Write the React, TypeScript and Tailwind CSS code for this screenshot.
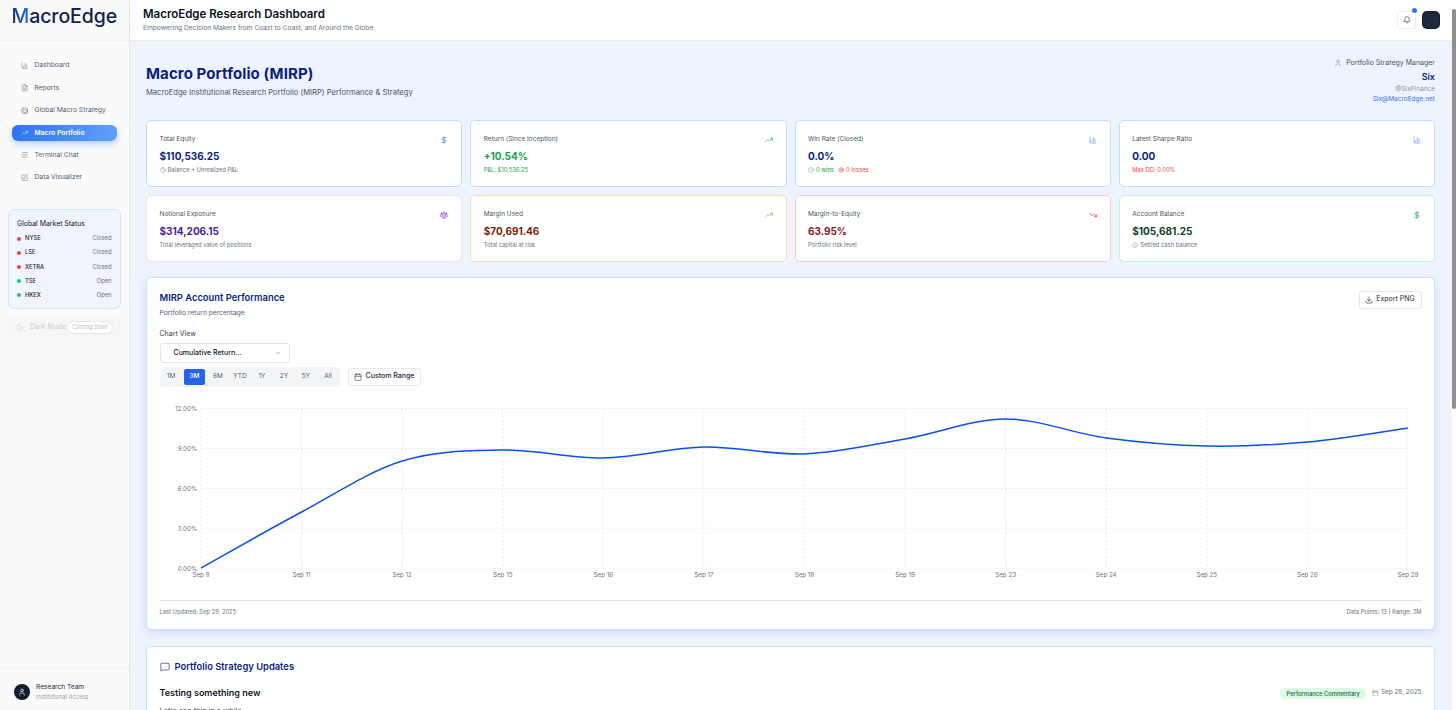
import React from "react";
import {
  Bell,
  Calendar,
  ChartColumn,
  CircleCheck,
  Clock,
  DollarSign,
  Download,
  Earth,
  FileText,
  Info,
  Menu,
  MessageSquare,
  Moon,
  ChevronDown,
  Scale,
  SquarePen,
  Target,
  TrendingDown,
  TrendingUp,
  User,
} from "lucide-react";

const navItems = [
  { label: "Dashboard", icon: ChartColumn },
  { label: "Reports", icon: FileText },
  { label: "Global Macro Strategy", icon: Earth },
  { label: "Macro Portfolio", icon: TrendingUp, active: true },
  { label: "Terminal Chat", icon: Menu },
  { label: "Data Visualizer", icon: SquarePen },
];

const markets = [
  { name: "NYSE", status: "Closed", open: false },
  { name: "LSE", status: "Closed", open: false },
  { name: "XETRA", status: "Closed", open: false },
  { name: "TSE", status: "Open", open: true },
  { name: "HKEX", status: "Open", open: true },
];

const ranges = ["1M", "3M", "6M", "YTD", "1Y", "2Y", "5Y", "All"];

// chart points as pixel positions inside the svg
const labels = ["Sep 8", "Sep 11", "Sep 12", "Sep 15", "Sep 16", "Sep 17", "Sep 18", "Sep 19", "Sep 23", "Sep 24", "Sep 25", "Sep 26", "Sep 29"];
const ys = [568, 512, 461, 450, 458, 447, 454, 439, 419, 438, 446, 442, 428];
const stepX = 100.58;

function linePath() {
  const pts = ys.map((y, i) => [200 + i * stepX, y]);
  let d = `M${pts[0][0]},${pts[0][1]}`;
  for (let i = 0; i < pts.length - 1; i++) {
    const p0 = pts[Math.max(i - 1, 0)];
    const p1 = pts[i];
    const p2 = pts[i + 1];
    const p3 = pts[Math.min(i + 2, pts.length - 1)];
    const c1x = p1[0] + (p2[0] - p0[0]) / 6;
    const c1y = p1[1] + (p2[1] - p0[1]) / 6;
    const c2x = p2[0] - (p3[0] - p1[0]) / 6;
    const c2y = p2[1] - (p3[1] - p1[1]) / 6;
    d += ` C${c1x},${c1y} ${c2x},${c2y} ${p2[0]},${p2[1]}`;
  }
  return d;
}

function Chart() {
  const grid = [
    { y: 408.5, label: "12.00%" },
    { y: 448.5, label: "9.00%" },
    { y: 488.5, label: "6.00%" },
    { y: 528, label: "3.00%" },
    { y: 568, label: "0.00%" },
  ];
  return (
    <svg width="1289" height="180" viewBox="146 398 1289 180" className="block mt-[11px]">
      {grid.map((g) => (
        <g key={g.y}>
          <line x1="200" x2="1407" y1={g.y} y2={g.y} stroke="#e5e7eb" strokeWidth="0.8" strokeDasharray="2 2" />
          <text x="196" y={g.y + 2.5} textAnchor="end" fontSize="6.2" fill="#6b7280">
            {g.label}
          </text>
        </g>
      ))}
      {labels.map((l, i) => (
        <g key={l}>
          <line x1={200 + i * stepX} x2={200 + i * stepX} y1="408" y2="568" stroke="#e5e7eb" strokeWidth="0.8" strokeDasharray="2 2" />
          <text x={200 + i * stepX} y="577" textAnchor="middle" fontSize="6.2" fill="#6b7280">
            {l}
          </text>
        </g>
      ))}
      <path d={linePath()} fill="none" stroke="#0b50e8" strokeWidth="1.5" />
    </svg>
  );
}

function StatCard({
  title,
  value,
  valueClass,
  border,
  icon,
  children,
}: {
  title: string;
  value: string;
  valueClass: string;
  border: string;
  icon: React.ReactNode;
  children: React.ReactNode;
}) {
  return (
    <div className={`h-[67px] rounded-[5px] border bg-white px-[12.5px] pt-[12.5px] ${border}`}>
      <div className="flex items-center justify-between h-[12px] pr-[0.5px]">
        <span className="text-[6.5px] text-[#4b5563]">{title}</span>
        {icon}
      </div>
      <div className={`mt-[1.5px] text-[10px] leading-[18px] font-bold ${valueClass}`}>{value}</div>
      <div className="-mt-[0.5px] flex items-center gap-[2px] text-[5.8px] leading-[10px] text-[#6b7280]">{children}</div>
    </div>
  );
}

export default function App() {
  return (
    <div className="flex h-[710px] w-[1456px] overflow-hidden bg-white text-[#111827] font-['Inter',sans-serif]">
      {/* Sidebar */}
      <aside className="flex w-[130px] shrink-0 flex-col border-r border-[#e5e7eb] bg-[#fafafa]">
        <div className="flex h-[41px] shrink-0 items-center border-b border-[#f0f1f3] pb-[7px] pl-[11.5px] text-[19.5px] font-medium tracking-[-0.1px] text-[#0f2350]">
          <span className="bg-gradient-to-r from-[#12306e] to-[#1d6ff0] bg-clip-text text-transparent">M</span>acroEdge
        </div>
        <nav className="flex flex-col gap-[6.4px] px-[12px] pt-[16.5px]">
          {navItems.map((item) => (
            <div
              key={item.label}
              className={
                item.active
                  ? "flex h-[16px] items-center gap-[6.5px] rounded-[6px] bg-gradient-to-r from-[#2f74ee] to-[#60a0fa] pl-[8.5px] text-[6.75px] font-semibold text-white shadow-[0_3px_6px_rgba(59,130,246,0.35)]"
                  : "flex h-[16px] items-center gap-[6.5px] pl-[8.5px] text-[6.75px] text-[#566173]"
              }
            >
              <item.icon size={7.5} strokeWidth={1.6} className={item.active ? "text-white" : "text-[#6b7280]"} />
              <span className="whitespace-nowrap">{item.label}</span>
            </div>
          ))}
        </nav>
        <div className="mx-[8px] mt-[23.5px] h-[100px] rounded-[6px] border border-[#d6e4fb] bg-[#eff4fe] px-[8px] pt-[8.5px]">
          <div className="text-[6.9px] leading-[12px] text-[#111827]">Global Market Status</div>
          <div className="mt-[1px] flex flex-col">
            {markets.map((m) => (
              <div key={m.name} className="flex h-[14.2px] items-center justify-between pr-[0.5px]">
                <div className="flex items-center gap-[4px]">
                  <span className={m.open ? "h-[4px] w-[4px] rounded-full bg-[#22c55e]" : "h-[4px] w-[4px] rounded-full bg-[#ef4444]"} />
                  <span className="text-[5.8px] font-medium text-[#1f2937]">{m.name}</span>
                </div>
                <span className="text-[5.8px] text-[#6b7280]">{m.status}</span>
              </div>
            ))}
          </div>
        </div>
        <div className="mx-[8px] mt-[8.5px] flex h-[20px] items-center rounded-[6px] bg-[#f6f6f7] pl-[8px] text-[#c9ccd2]">
          <Moon size={8} strokeWidth={1.6} />
          <span className="ml-[6px] text-[7px]">Dark Mode</span>
          <span className="ml-[0.5px] rounded-full border border-[#e5e7eb] bg-white px-[4.5px] text-[5.5px] leading-[11px] text-[#b9bdc5]">Coming Soon</span>
        </div>
        <div className="mt-auto flex h-[42px] items-center gap-[6px] border-t border-[#f0f1f3] pl-[14px] pt-[4px]">
          <div className="flex h-[16px] w-[16px] items-center justify-center rounded-full bg-[#111c2e] text-white">
            <User size={8} strokeWidth={2} />
          </div>
          <div>
            <div className="text-[6.6px] leading-[10px] text-[#1f2937]">Research Team</div>
            <div className="text-[5.7px] leading-[9px] text-[#9aa3af]">Institutional Access</div>
          </div>
        </div>
      </aside>

      <div className="flex min-w-0 flex-1 flex-col">
        {/* Top bar */}
        <header className="flex h-[41px] shrink-0 items-center justify-between border-b border-[#e8eaee] bg-white pl-[13px] pr-[13px]">
          <div>
            <h1 className="text-[11.5px] font-semibold leading-[15px] text-[#0b1220]">MacroEdge Research Dashboard</h1>
            <p className="mt-[1.5px] text-[6.65px] leading-[10px] text-[#6b7280]">Empowering Decision Makers from Coast to Coast, and Around the Globe</p>
          </div>
          <div className="flex items-center gap-[7px]">
            <div className="relative flex h-[18px] w-[19px] items-center justify-center rounded-[3px] border border-[#eceef1] bg-white">
              <Bell size={8} strokeWidth={1.7} className="text-[#1f2937]" />
              <span className="absolute -right-[2px] -top-[4px] h-[5px] w-[5px] rounded-full bg-[#2f74ee]" />
            </div>
            <div className="h-[16px] w-[16px] rounded-[4px] bg-[#1e293b] ring-1 ring-[#111827]" />
          </div>
        </header>

        {/* Main */}
        <main className="min-h-0 flex-1 overflow-hidden bg-[#eef4fe] pl-[16px] pr-[17px] pt-[20px]">
          <div className="flex h-[59px] justify-between">
            <div>
              <h2 className="text-[15px] font-bold leading-[26px] tracking-[0.1px] text-[#0c1f80]">Macro Portfolio (MIRP)</h2>
              <p className="-mt-[0.5px] text-[7.6px] leading-[11px] text-[#4b5563]">MacroEdge Institutional Research Portfolio (MIRP) Performance &amp; Strategy</p>
            </div>
            <div className="-mt-[3px] flex flex-col items-end text-right">
              <div className="flex items-center gap-[4px] text-[7px] leading-[10px] text-[#4b5563]">
                <User size={8} strokeWidth={1.6} className="text-[#8a93a1]" />
                Portfolio Strategy Manager
              </div>
              <div className="mt-[3px] text-[9px] font-semibold leading-[12px] text-[#0c1f80]">Six</div>
              <div className="mt-[2px] text-[6.5px] leading-[9px] text-[#8a93a1]">@SixFinance</div>
              <div className="text-[6.5px] leading-[11px] text-[#3b6ff0]">Six@MacroEdge.net</div>
            </div>
          </div>

          <div className="grid grid-cols-4 gap-x-[8px] gap-y-[8px]">
            <StatCard title="Total Equity" value="$110,536.25" valueClass="text-[#0c1f80]" border="border-[#bfdbfe]" icon={<DollarSign size={8} strokeWidth={2} className="text-[#3b82f6]" />}>
              <Clock size={6} strokeWidth={1.5} />
              Balance + Unrealized P&amp;L
            </StatCard>
            <StatCard title="Return (Since Inception)" value="+10.54%" valueClass="text-[#16a34a]" border="border-[#bfdbfe]" icon={<TrendingUp size={8} strokeWidth={2} className="text-[#16a34a]" />}>
              <span className="text-[#16a34a]">P&amp;L: $10,536.25</span>
            </StatCard>
            <StatCard title="Win Rate (Closed)" value="0.0%" valueClass="text-[#0c1f80]" border="border-[#bfdbfe]" icon={<ChartColumn size={8} strokeWidth={1.6} className="text-[#3b82f6]" />}>
              <CircleCheck size={6} strokeWidth={1.5} className="text-[#16a34a]" />
              <span className="text-[#16a34a]">0 wins</span>
              <Target size={6} strokeWidth={1.5} className="ml-[2px] text-[#ef4444]" />
              <span className="text-[#ef4444]">0 losses</span>
            </StatCard>
            <StatCard title="Latest Sharpe Ratio" value="0.00" valueClass="text-[#0c1f80]" border="border-[#bfdbfe]" icon={<ChartColumn size={8} strokeWidth={1.6} className="text-[#3b82f6]" />}>
              <span className="text-[#ef4444]">Max DD: 0.00%</span>
            </StatCard>
            <StatCard title="Notional Exposure" value="$314,206.15" valueClass="text-[#4c1d95]" border="border-[#ecdcfd]" icon={<Scale size={8} strokeWidth={2} className="text-[#9333ea]" />}>
              Total leveraged value of positions
            </StatCard>
            <StatCard title="Margin Used" value="$70,691.46" valueClass="text-[#7c1d06]" border="border-[#fed7aa]" icon={<TrendingUp size={8} strokeWidth={2} className="text-[#f97316]" />}>
              Total capital at risk
            </StatCard>
            <StatCard title="Margin-to-Equity" value="63.95%" valueClass="text-[#7f1d1d]" border="border-[#fecaca]" icon={<TrendingDown size={8} strokeWidth={2} className="text-[#dc2626]" />}>
              Portfolio risk level
            </StatCard>
            <StatCard title="Account Balance" value="$105,681.25" valueClass="text-[#14432a]" border="border-[#bbf7d0]" icon={<DollarSign size={8} strokeWidth={2} className="text-[#16a34a]" />}>
              <Info size={6} strokeWidth={1.5} />
              Settled cash balance
            </StatCard>
          </div>

          {/* Chart card */}
          <section className="mt-[15px] h-[352.5px] rounded-[5px] border border-[#cfe0fb] bg-white px-[12.5px] pt-[12.5px] shadow-[0_3px_8px_rgba(59,110,220,0.18)]">
            <div className="flex items-start justify-between">
              <div>
                <h3 className="text-[9.4px] font-semibold leading-[14px] text-[#0c1f80]">MIRP Account Performance</h3>
                <p className="mt-[3px] text-[6.7px] leading-[10px] text-[#566173]">Portfolio return percentage</p>
              </div>
              <button className="flex h-[18px] w-[63px] items-center justify-center gap-[3px] rounded-[3px] border border-[#e5e7eb] bg-white text-[7px] text-[#1f2937]">
                <Download size={8} strokeWidth={1.8} />
                Export PNG
              </button>
            </div>
            <div className="mt-[11px] text-[7px] leading-[10px] text-[#374151]">Chart View</div>
            <div className="mt-[4.5px] flex h-[20px] w-[130px] items-center justify-between rounded-[3px] border border-[#e5e7eb] bg-white pl-[13px] pr-[7px] text-[7px] font-medium text-[#111827]">
              Cumulative Return...
              <ChevronDown size={8} strokeWidth={1.5} className="text-[#6b7280]" />
            </div>
            <div className="mt-[3.5px] flex items-center gap-[8px]">
              <div className="flex h-[20px] w-[180px] items-center justify-between rounded-[3px] bg-[#f3f4f6] px-[2.5px] text-[6.5px] text-[#566173]">
                {ranges.map((r) => (
                  <span
                    key={r}
                    className={
                      r === "3M"
                        ? "flex h-[16px] w-[21px] items-center justify-center rounded-[2px] bg-[#2563eb] font-medium text-white"
                        : "flex h-[16px] min-w-[18px] items-center justify-center"
                    }
                  >
                    {r}
                  </span>
                ))}
              </div>
              <button className="flex h-[18px] w-[73px] items-center justify-center gap-[4px] rounded-[3px] border border-[#e5e7eb] bg-white text-[7px] font-medium text-[#1f2937]">
                <Calendar size={8} strokeWidth={1.6} />
                Custom Range
              </button>
            </div>
            <div className="-mx-[12.5px]">
              <Chart />
            </div>
            <div className="mt-[22.5px] flex items-center justify-between border-t border-[#e5e7eb] pt-[6px] text-[5.8px] leading-[9px] text-[#6b7280]">
              <span>Last Updated: Sep 29, 2025</span>
              <span>Data Points: 13 | Range: 3M</span>
            </div>
          </section>

          {/* Strategy updates */}
          <section className="mt-[16px] h-[200px] rounded-[5px] border border-[#cfe0fb] bg-white px-[12.5px] pt-[13px]">
            <div className="flex items-center gap-[5px]">
              <MessageSquare size={10} strokeWidth={1.5} className="text-[#0c1f80]" />
              <h3 className="text-[9.4px] font-semibold leading-[14px] text-[#0c1f80]">Portfolio Strategy Updates</h3>
            </div>
            <div className="mt-[12.5px] flex items-center justify-between">
              <h4 className="text-[9px] font-semibold leading-[14px] text-[#111827]">Testing something new</h4>
              <div className="flex items-center gap-[6.5px]">
                <span className="rounded-full bg-[#dcfce7] px-[6px] text-[5.8px] font-medium leading-[11px] text-[#166534]">Performance Commentary</span>
                <span className="flex items-center gap-[2px] text-[6.4px] text-[#6b7280]">
                  <Calendar size={6.5} strokeWidth={1.5} />
                  Sep 28, 2025
                </span>
              </div>
            </div>
            <p className="mt-[6px] text-[7.5px] text-[#374151]">Let's see this in a while.</p>
          </section>
        </main>
      </div>

      {/* Scrollbar */}
      <div className="w-[4px] shrink-0 bg-white pt-[9px]">
        <div className="h-[400px] rounded-full bg-[#8f8f8f]" />
      </div>
    </div>
  );
}
